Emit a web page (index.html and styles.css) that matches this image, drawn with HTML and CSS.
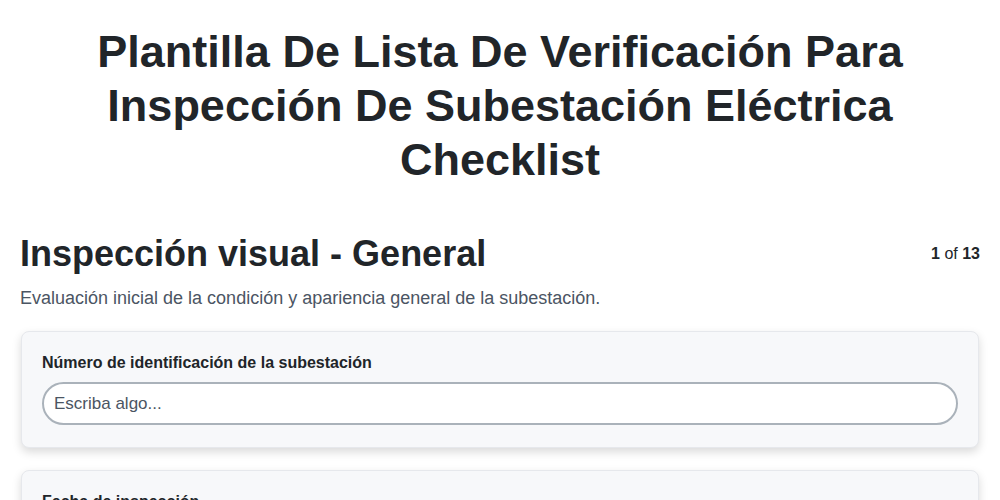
FILE: index.html
```html
<!DOCTYPE html>
<html lang="es">
<head>
  <meta charset="UTF-8">
  <meta name="viewport" content="width=device-width, initial-scale=1.0">
  <title>Plantilla De Lista De Verificación Para Inspección De Subestación Eléctrica Checklist</title>
  <link rel="stylesheet" href="styles.css">
</head>
<body>
  <div class="page">
    <h1>Plantilla De Lista De Verificación Para Inspección De Subestación Eléctrica Checklist</h1>

    <div class="section-head">
      <h2>Inspección visual - General</h2>
      <div class="step"><strong>1</strong> of <strong>13</strong></div>
    </div>
    <p class="section-desc">Evaluación inicial de la condición y apariencia general de la subestación.</p>

    <div class="card">
      <label class="field-label" for="sub-id">Número de identificación de la subestación</label>
      <input class="text-input" id="sub-id" type="text" placeholder="Escriba algo...">
    </div>

    <div class="card">
      <label class="field-label" for="fecha">Fecha de inspección</label>
      <input class="text-input" id="fecha" type="text" placeholder="Escriba algo...">
    </div>
  </div>
</body>
</html>
```

FILE: styles.css
```css
body {
  font-family: "Liberation Sans", Arial, sans-serif;
  color: #212529;
  background-color: #fff;
  margin: 0;
}
.page {
  padding: 25px 20px 20px;
}
h1 {
  font-size: 45px;
  line-height: 54px;
  font-weight: bold;
  text-align: center;
  margin: 0 60px 45px;
}
.section-head {
  display: flex;
  justify-content: space-between;
  align-items: flex-start;
}
h2 {
  font-size: 36px;
  line-height: 43px;
  font-weight: bold;
  margin: 0;
}
.step {
  font-size: 16px;
  padding-top: 13px;
}
.section-desc {
  font-size: 18px;
  color: #4b5563;
  margin: 13px 0 22px;
}
.card {
  background-color: #f7f8fa;
  border: 1px solid #e6e8ec;
  border-radius: 8px;
  box-shadow: 0 4px 10px rgba(0, 0, 0, 0.15);
  padding: 22px 20px 22px;
  margin: 0 1px 22px;
}
.field-label {
  display: block;
  font-size: 16px;
  font-weight: bold;
  margin-bottom: 10px;
}
.text-input {
  display: block;
  box-sizing: border-box;
  width: 100%;
  height: 43px;
  padding: 0 10px;
  font-family: inherit;
  font-size: 17px;
  color: #212529;
  background-color: #fff;
  border: 2px solid #aab2ba;
  border-radius: 22px;
  outline: none;
}
.text-input::placeholder {
  color: #4b5563;
}
```
